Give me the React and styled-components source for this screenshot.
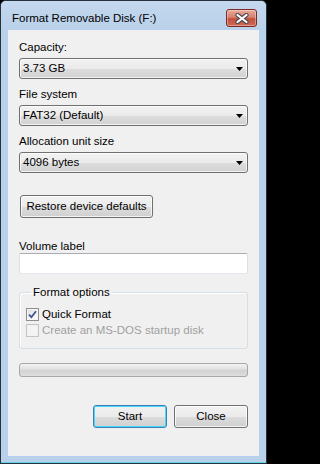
import React from 'react'
import styled, { createGlobalStyle } from 'styled-components'

const GlobalStyle = createGlobalStyle`
  html, body {
    margin: 0;
    padding: 0;
    background: #000;
  }
  body {
    font-family: "Liberation Sans", Arial, sans-serif;
    font-size: 11.5px;
    color: #000;
  }
`

const Window = styled.div`
  width: 267px;
  height: 464px;
  box-sizing: border-box;
  border: 1px solid #28323c;
  border-radius: 6px 6px 0 0;
  background: #b9d1ea;
  box-shadow: inset 0 -1px 0 #5fd3ea, inset 0 1px 0 rgba(255, 255, 255, 0.6);
  display: flex;
  flex-direction: column;
`

const TitleBar = styled.div`
  height: 29px;
  flex-shrink: 0;
  display: flex;
  justify-content: space-between;
  align-items: flex-start;
  padding: 0 9px 0 11px;
  background: linear-gradient(#c4d8ee, #b9d1ea);
  border-radius: 5px 5px 0 0;
`

const Title = styled.div`
  margin-top: 10px;
  line-height: 15px;
  font-size: 11.5px;
  color: #000;
`

const CloseBox = styled.div`
  margin-top: 8px;
  width: 31px;
  height: 18px;
  box-sizing: border-box;
  border: 1px solid #7a2b24;
  border-radius: 3px;
  background: linear-gradient(#e9ab9c 0%, #d98070 45%, #c4503f 55%, #cf6a55 100%);
  box-shadow: inset 0 0 0 1px rgba(255, 255, 255, 0.35);
  display: flex;
  align-items: center;
  justify-content: center;
`

const Frame = styled.div`
  flex: 1;
  display: flex;
  padding: 0 7px 7px;
`

const Client = styled.div`
  flex: 1;
  background: #f0f0f0;
  display: flex;
  flex-direction: column;
  padding: 10px 11px 0;
`

const Label = styled.div`
  line-height: ${(p) => (p.$tight ? '14px' : '15px')};
  margin-top: ${(p) => p.$top || 0}px;
  margin-bottom: ${(p) => (p.$tight ? 0 : 3)}px;
`

const Combo = styled.div`
  height: 21px;
  box-sizing: border-box;
  border: 1px solid #707070;
  border-radius: 3px;
  background: linear-gradient(#f2f2f2 0%, #ebebeb 50%, #dddddd 51%, #d2d2d2 100%);
  box-shadow: inset 0 0 0 1px rgba(255, 255, 255, 0.7);
  display: flex;
  align-items: center;
  justify-content: space-between;
  padding: 0 4px 0 3px;
  margin-bottom: 8px;
  line-height: 15px;
`

const Button = styled.div`
  width: ${(p) => p.$w}px;
  height: 23px;
  box-sizing: border-box;
  border: 1px solid ${(p) => (p.$default ? '#3c7fb1' : '#707070')};
  border-radius: 3px;
  background: linear-gradient(#f2f2f2 0%, #ebebeb 50%, #dddddd 51%, #cfcfcf 100%);
  box-shadow: inset 0 0 0 1px ${(p) => (p.$default ? '#48d8fb' : 'rgba(255, 255, 255, 0.75)')};
  display: flex;
  align-items: center;
  justify-content: center;
  line-height: 15px;
`

const RestoreButton = styled(Button)`
  margin-top: 14px;
  margin-left: 1px;
`

const TextBox = styled.div`
  height: 21px;
  box-sizing: border-box;
  border: 1px solid #dbdfe6;
  border-top-color: #abadb3;
  border-bottom-color: #e3e9ef;
  border-radius: 2px;
  background: #fff;
`

const Group = styled.fieldset`
  margin: 11px 0 0;
  padding: 6px 6px 10px;
  border: 1px solid #d5dfe5;
  border-radius: 3px;
  box-shadow: inset 1px 1px 0 #fff;
  min-width: 0;
`

const Legend = styled.legend`
  margin-left: 5px;
  padding: 0 2px;
  line-height: 15px;
`

const CheckRow = styled.div`
  height: 16px;
  display: flex;
  align-items: center;
  gap: 3px;
  color: ${(p) => (p.$disabled ? '#a0a0a0' : '#000')};
`

const Box = styled.div`
  width: 13px;
  height: 13px;
  box-sizing: border-box;
  border: 1px solid ${(p) => (p.$disabled ? '#c4c4c4' : '#8e8f8f')};
  background: ${(p) =>
    p.$disabled
      ? '#f4f4f4'
      : 'linear-gradient(135deg, #dcdcdc 0%, #f4f4f4 60%, #ffffff 100%)'};
  box-shadow: inset 0 0 0 1px ${(p) => (p.$disabled ? '#f0f0f0' : '#f4f4f4')};
  display: flex;
  align-items: center;
  justify-content: center;
`

const Progress = styled.div`
  margin-top: 14px;
  height: 14px;
  box-sizing: border-box;
  border: 1px solid #a8a8a8;
  border-radius: 3px;
  background: linear-gradient(#f3f3f3 0%, #e2e2e2 40%, #d2d2d2 55%, #dedede 100%);
`

const ButtonRow = styled.div`
  margin-top: 28px;
  display: flex;
  justify-content: flex-end;
  gap: 7px;
`

const Arrow = () => (
  <svg width="7" height="4" viewBox="0 0 7 4">
    <polygon points="0,0 7,0 3.5,4" fill="#000" />
  </svg>
)

const CloseX = () => (
  <svg width="14" height="11" viewBox="0 0 14 11">
    <path d="M2.5 2 L11.5 9 M11.5 2 L2.5 9" stroke="#4a4a4a" strokeWidth="4.2" strokeLinecap="round" />
    <path d="M2.5 2 L11.5 9 M11.5 2 L2.5 9" stroke="#fff" strokeWidth="2.2" strokeLinecap="round" />
  </svg>
)

const Tick = () => (
  <svg width="9" height="9" viewBox="0 0 9 9">
    <path d="M1 4.6 L3.4 7.2 L8 1.2" fill="none" stroke="#3b5390" strokeWidth="1.8" />
  </svg>
)

const Select = ({ value }) => (
  <Combo>
    <span>{value}</span>
    <Arrow />
  </Combo>
)

const Check = ({ checked, disabled, children }) => (
  <CheckRow $disabled={disabled}>
    <Box $disabled={disabled}>{checked && <Tick />}</Box>
    <span>{children}</span>
  </CheckRow>
)

const App = () => {
  return (
    <>
      <GlobalStyle />
      <Window>
        <TitleBar>
          <Title>Format Removable Disk (F:)</Title>
          <CloseBox>
            <CloseX />
          </CloseBox>
        </TitleBar>
        <Frame>
          <Client>
            <Label>Capacity:</Label>
            <Select value="3.73 GB" />
            <Label>File system</Label>
            <Select value="FAT32 (Default)" />
            <Label>Allocation unit size</Label>
            <Select value="4096 bytes" />

            <RestoreButton $w={133}>Restore device defaults</RestoreButton>

            <Label $top={21} $tight>Volume label</Label>
            <TextBox />

            <Group>
              <Legend>Format options</Legend>
              <Check checked>Quick Format</Check>
              <Check disabled>Create an MS-DOS startup disk</Check>
            </Group>

            <Progress />

            <ButtonRow>
              <Button $w={74} $default>Start</Button>
              <Button $w={74}>Close</Button>
            </ButtonRow>
          </Client>
        </Frame>
      </Window>
    </>
  )
}

export default App
